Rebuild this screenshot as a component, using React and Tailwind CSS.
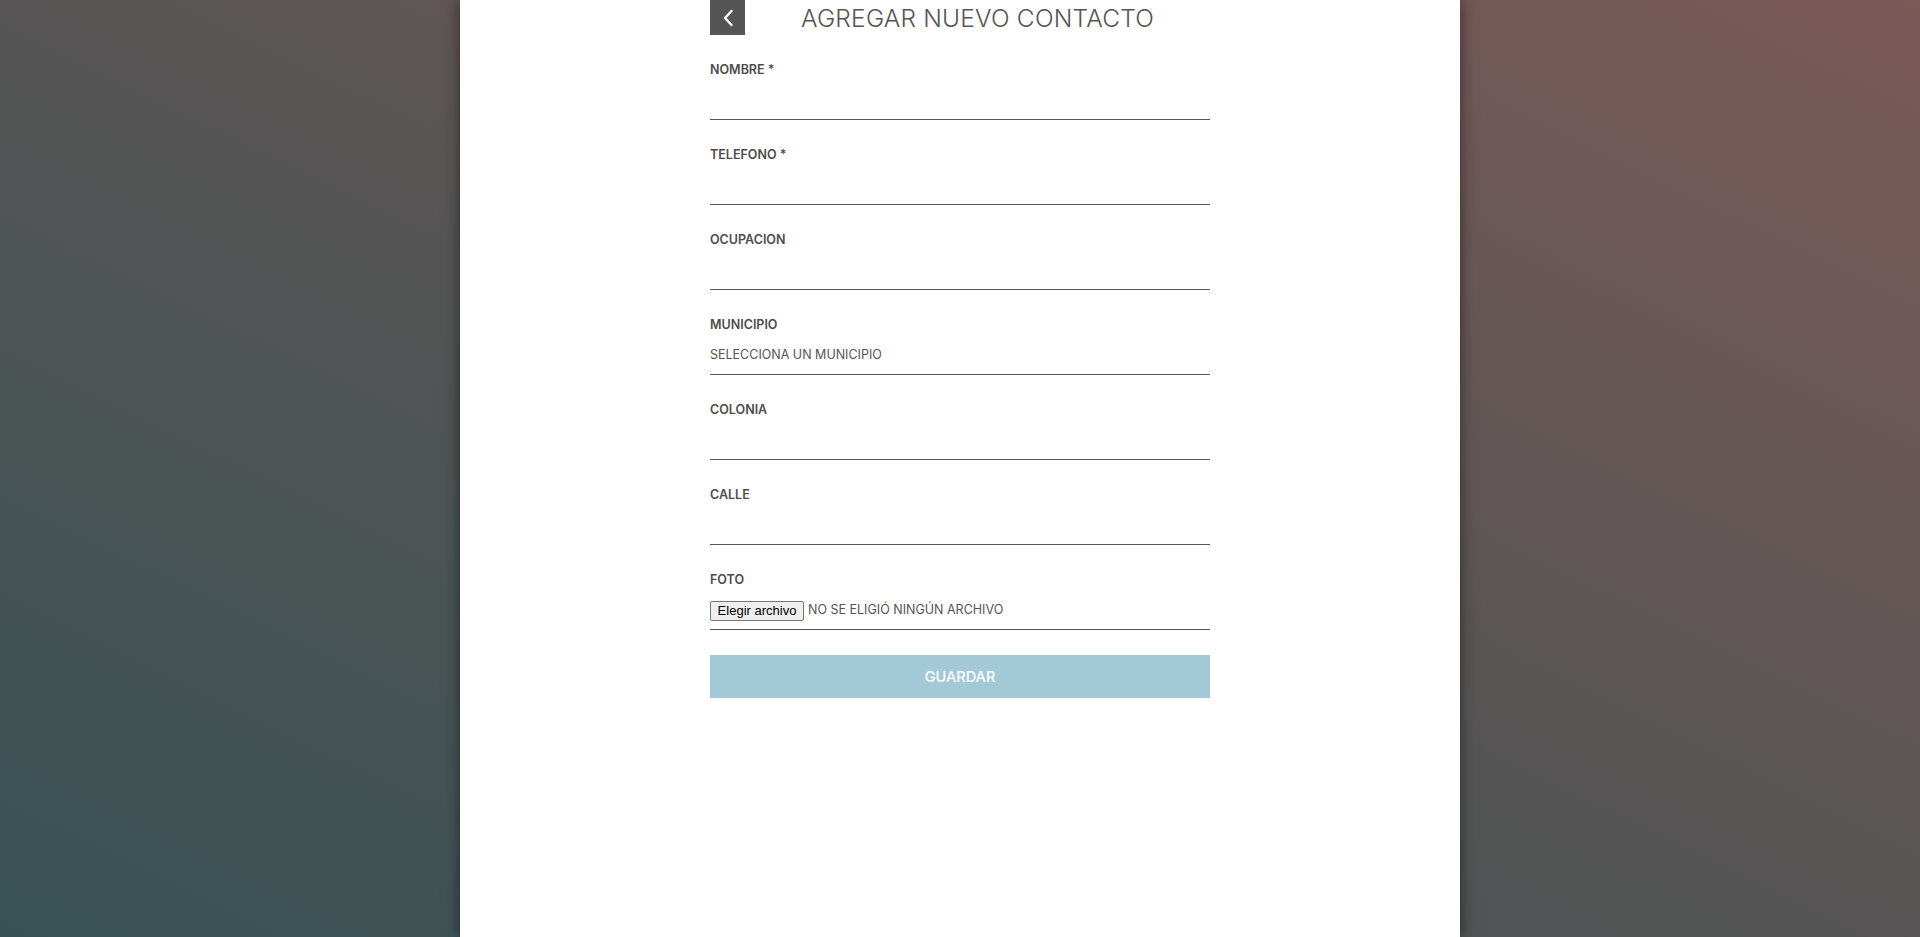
import React from "react";

const fields = ["NOMBRE *", "TELEFONO *", "OCUPACION"];
const fields2 = ["COLONIA", "CALLE"];

function Field({ label, children }) {
  return (
    <div className="mt-[25px] first:mt-0">
      <div className="text-[12.5px] leading-[20px] font-semibold text-[#4d4d4d]">{label}</div>
      <div className="h-[40px] border-b border-[#555] flex items-center">{children}</div>
    </div>
  );
}

export default function App() {
  return (
    <div
      className="min-h-screen w-full bg-[linear-gradient(to_top_right,#385254_0%,#575555_50%,#7b5a58_100%)]"
      style={{ fontFamily: "Inter, 'Open Sans', Arial, sans-serif" }}
    >
      <div className="mx-auto w-[1000px] min-h-[937px] bg-white shadow-[0_0_14px_rgba(0,0,0,0.5)]">
        <div className="mx-auto w-[500px]">
          <div className="flex items-center h-[35px]">
            <button className="w-[35px] h-[35px] bg-[#555555] flex items-center justify-center shrink-0">
              <svg width="12" height="18" viewBox="0 0 12 18" fill="none">
                <path d="M9.5 2 L3 9 L9.5 16" stroke="white" strokeWidth="2.4" strokeLinecap="round" strokeLinejoin="round" />
              </svg>
            </button>
            <h1 className="flex-1 text-center text-[24.5px] font-light text-[#555] leading-[35px] tracking-[0.2px] pt-[2px]">
              AGREGAR NUEVO CONTACTO
            </h1>
          </div>
          <div className="pt-[25px]">
            {fields.map((f) => (
              <Field key={f} label={f} />
            ))}
            <Field label="MUNICIPIO">
              <span className="text-[12.5px] text-[#555] pt-[1px]">SELECCIONA UN MUNICIPIO</span>
            </Field>
            {fields2.map((f) => (
              <Field key={f} label={f} />
            ))}
            <Field label="FOTO">
              <div className="flex items-center pt-[2px]">
                <span
                  className="h-[20px] w-[94px] flex items-center justify-center border border-[#767676] bg-[#efefef] rounded-[2px] text-[13px] text-black"
                  style={{ fontFamily: "Arial, 'Liberation Sans', sans-serif" }}
                >
                  Elegir archivo
                </span>
                <span className="ml-[4px] text-[12.5px] text-[#555]">NO SE ELIGIÓ NINGÚN ARCHIVO</span>
              </div>
            </Field>
            <button className="mt-[25px] w-full h-[43px] bg-[#a4c9d6] text-white text-[14.5px] font-medium">
              GUARDAR
            </button>
          </div>
        </div>
      </div>
    </div>
  );
}
